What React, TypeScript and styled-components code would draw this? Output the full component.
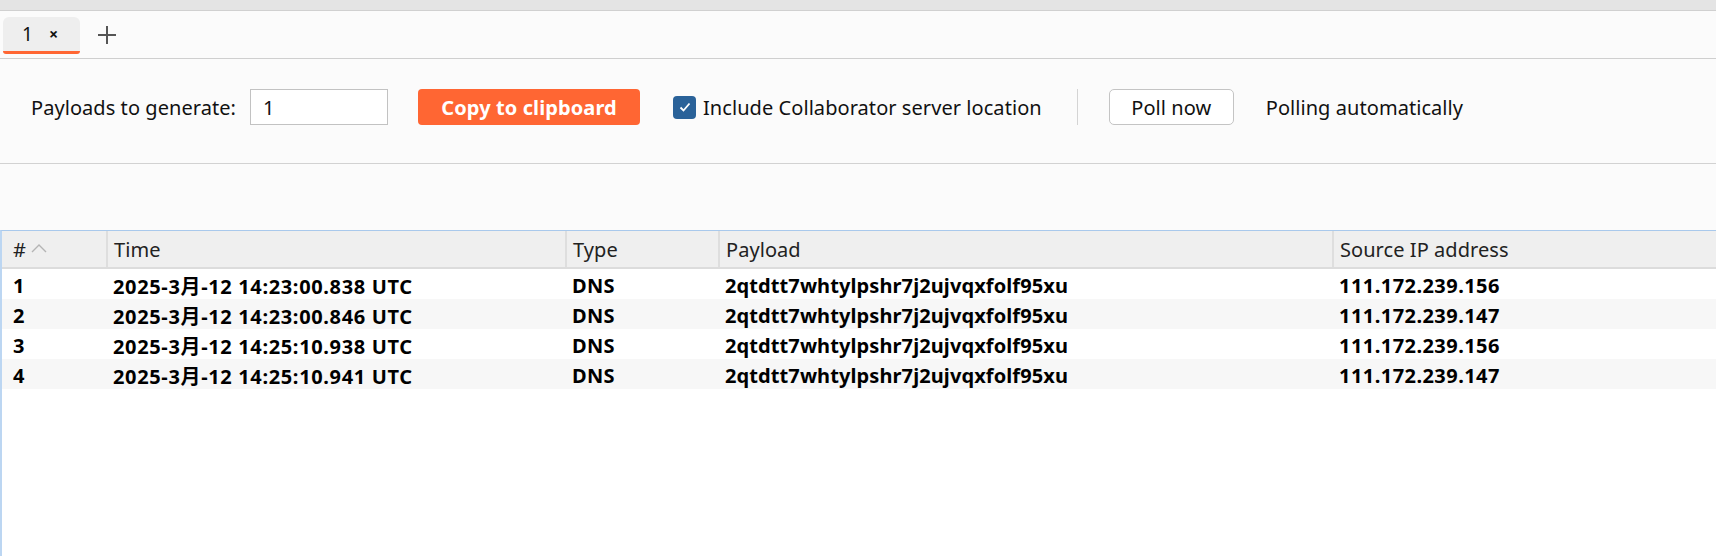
import React from 'react'
import { styled, createGlobalStyle } from 'styled-components'

const GlobalStyle = createGlobalStyle`
  html, body {
    margin: 0;
    padding: 0;
    height: 100%;
    background: #fbfbfb;
  }
  #root {
    height: 100%;
  }
  * {
    box-sizing: border-box;
  }
`

const FONT = `"Noto Sans", "Noto Sans CJK SC", "Liberation Sans", sans-serif`

const interactions = [
  { id: 1, time: '2025-3月-12 14:23:00.838 UTC', type: 'DNS', payload: '2qtdtt7whtylpshr7j2ujvqxfolf95xu', ip: '111.172.239.156' },
  { id: 2, time: '2025-3月-12 14:23:00.846 UTC', type: 'DNS', payload: '2qtdtt7whtylpshr7j2ujvqxfolf95xu', ip: '111.172.239.147' },
  { id: 3, time: '2025-3月-12 14:25:10.938 UTC', type: 'DNS', payload: '2qtdtt7whtylpshr7j2ujvqxfolf95xu', ip: '111.172.239.156' },
  { id: 4, time: '2025-3月-12 14:25:10.941 UTC', type: 'DNS', payload: '2qtdtt7whtylpshr7j2ujvqxfolf95xu', ip: '111.172.239.147' },
]

const columns = ['#', 'Time', 'Type', 'Payload', 'Source IP address']

const App = () => {
  return (
    <>
      <GlobalStyle />
      <Page>
        <TopBar />
        <TabStrip>
          <Tab>
            <span>1</span>
            <TabClose>×</TabClose>
          </Tab>
          <AddTab aria-label="new tab">
            <svg width="20" height="20" viewBox="0 0 20 20">
              <path d="M10 1v18M1 10h18" stroke="#555" strokeWidth="2" fill="none" />
            </svg>
          </AddTab>
        </TabStrip>
        <Toolbar>
          <Label>Payloads to generate:</Label>
          <CountInput defaultValue="1" />
          <PrimaryButton>Copy to clipboard</PrimaryButton>
          <CheckLabel>
            <CheckBox>
              <svg width="14" height="14" viewBox="0 0 14 14">
                <path d="M2.5 7.5l3 3 6-7" stroke="#fff" strokeWidth="1.8" fill="none" />
              </svg>
            </CheckBox>
            Include Collaborator server location
          </CheckLabel>
          <Separator />
          <PlainButton>Poll now</PlainButton>
          <StatusText>Polling automatically</StatusText>
        </Toolbar>
        <Spacer />
        <TableArea>
          <HeaderRow>
            {columns.map((c, i) => (
              <HeaderCell key={c} $first={i === 0}>
                {c}
                {i === 0 && (
                  <SortArrow width="16" height="10" viewBox="0 0 16 10">
                    <path d="M1 9l7-7 7 7" stroke="#b4b4b4" strokeWidth="1.4" fill="none" />
                  </SortArrow>
                )}
              </HeaderCell>
            ))}
          </HeaderRow>
          {interactions.map((r, i) => (
            <Row key={r.id} $striped={i % 2 === 1}>
              <Cell $first $tracking={0.5}>{r.id}</Cell>
              <Cell $tracking={0.65}>{r.time}</Cell>
              <Cell $tracking={0.3}>{r.type}</Cell>
              <Cell $tracking={0.1}>{r.payload}</Cell>
              <Cell $tracking={0.45}>{r.ip}</Cell>
            </Row>
          ))}
        </TableArea>
      </Page>
    </>
  )
}

export default App

const Page = styled.div`
  display: flex;
  flex-direction: column;
  height: 100vh;
  font-family: ${FONT};
  font-size: 20px;
  letter-spacing: 0.06px;
  color: #111;
  background: #fbfbfb;
`

const TopBar = styled.div`
  height: 11px;
  flex-shrink: 0;
  background: #e4e4e4;
  border-bottom: 1px solid #d0d0d0;
`

const TabStrip = styled.div`
  height: 48px;
  flex-shrink: 0;
  display: flex;
  align-items: flex-end;
  padding: 0 0 4px 3px;
  border-bottom: 1px solid #cfcfcf;
`

const Tab = styled.div`
  width: 77px;
  height: 37px;
  display: flex;
  align-items: center;
  padding-left: 19px;
  gap: 16px;
  background: #eeeeee;
  border-radius: 6px 6px 3px 3px;
  border-bottom: 3px solid #ff6633;
  font-size: 19px;
  color: #111;
`

const TabClose = styled.span`
  font-size: 16px;
  font-weight: 700;
`

const AddTab = styled.div`
  width: 20px;
  height: 20px;
  margin-left: 17px;
  margin-top: 4px;
  display: flex;
  align-self: center;
`

const Toolbar = styled.div`
  height: 105px;
  flex-shrink: 0;
  display: flex;
  align-items: flex-start;
  padding: 30px 0 0 31px;
  border-bottom: 1px solid #d2d2d2;
`

const Label = styled.span`
  height: 36px;
  display: flex;
  align-items: center;
`

const CountInput = styled.input`
  width: 138px;
  height: 36px;
  margin-left: 14px;
  padding: 0 12px;
  border: 1px solid #c2c2c2;
  background: #fff;
  font-family: ${FONT};
  font-size: 20px;
  color: #111;
  outline: none;
`

const PrimaryButton = styled.button`
  width: 222px;
  height: 36px;
  margin-left: 30px;
  border: none;
  border-radius: 4px;
  background: #ff6633;
  color: #fff;
  font-family: ${FONT};
  font-size: 20px;
  font-weight: 700;
  letter-spacing: 0.1px;
  cursor: pointer;
`

const CheckLabel = styled.label`
  height: 36px;
  margin-left: 33px;
  display: flex;
  align-items: center;
  gap: 7px;
`

const CheckBox = styled.span`
  width: 23px;
  height: 23px;
  border-radius: 4px;
  background: #2a6299;
  display: flex;
  align-items: center;
  justify-content: center;
`

const Separator = styled.div`
  width: 1px;
  height: 36px;
  margin-left: 35px;
  background: #d4d4d4;
`

const PlainButton = styled.button`
  width: 125px;
  height: 36px;
  margin-left: 31px;
  border: 1px solid #c4c4c4;
  border-radius: 5px;
  background: #fff;
  color: #111;
  font-family: ${FONT};
  font-size: 20px;
  letter-spacing: 0.06px;
  cursor: pointer;
`

const StatusText = styled.span`
  height: 36px;
  margin-left: 32px;
  display: flex;
  align-items: center;
`

const Spacer = styled.div`
  height: 66px;
  flex-shrink: 0;
`

const TableArea = styled.div`
  flex: 1;
  background: #fff;
  border-top: 1px solid #a9c9ec;
  border-left: 2px solid #bcd6f2;
`

const GRID = `104px 459px 153px 614px 1fr`

const HeaderRow = styled.div`
  display: grid;
  grid-template-columns: ${GRID};
  height: 38px;
  background: #efefef;
  border-bottom: 2px solid #dcdcdc;
`

const HeaderCell = styled.div<{ $first?: boolean }>`
  display: flex;
  align-items: center;
  padding-left: ${(p) => (p.$first ? '11px' : '6px')};
  border-left: ${(p) => (p.$first ? 'none' : '2px solid #dedede')};
  color: #222;
`

const SortArrow = styled.svg`
  margin-left: 5px;
  margin-top: -2px;
`

const Row = styled.div<{ $striped?: boolean }>`
  display: grid;
  grid-template-columns: ${GRID};
  height: 30px;
  background: ${(p) => (p.$striped ? '#f7f7f7' : '#fff')};
  font-weight: 700;
  color: #000;
`

const Cell = styled.div<{ $first?: boolean; $tracking?: number }>`
  display: flex;
  align-items: center;
  padding-top: 2px;
  padding-left: ${(p) => (p.$first ? '11px' : '7px')};
  letter-spacing: ${(p) => p.$tracking ?? 0}px;
  white-space: nowrap;
`
